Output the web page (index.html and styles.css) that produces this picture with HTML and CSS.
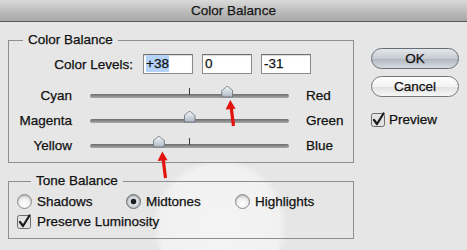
FILE: index.html
```html
<!DOCTYPE html>
<html lang="en">
<head>
    <title>Color Balance</title>
    <link rel="stylesheet" href="styles.css">
</head>
<body>
    <div class="titlebar">Color Balance</div>
    <div class="dialog">
        <div class="main">
            <fieldset class="group balance">
                <legend>Color Balance</legend>
                <div class="levels">
                    <span class="levels-label">Color Levels:</span>
                    <span class="field"><span class="selected">+38</span></span>
                    <span class="field">0</span>
                    <span class="field">-31</span>
                </div>
                <div class="sliders">
                    <div class="slider-row">
                        <span class="side left">Cyan</span>
                        <div class="track">
                            <span class="tick"></span>
                            <span class="thumb" style="left: 69%;"></span>
                        </div>
                        <span class="side">Red</span>
                    </div>
                    <div class="slider-row">
                        <span class="side left">Magenta</span>
                        <div class="track">
                            <span class="tick"></span>
                            <span class="thumb" style="left: 50%;"></span>
                        </div>
                        <span class="side">Green</span>
                    </div>
                    <div class="slider-row">
                        <span class="side left">Yellow</span>
                        <div class="track">
                            <span class="tick"></span>
                            <span class="thumb" style="left: 34.6%;"></span>
                        </div>
                        <span class="side">Blue</span>
                    </div>
                </div>
            </fieldset>

            <fieldset class="group tone">
                <legend>Tone Balance</legend>
                <div class="radios">
                    <label class="option"><span class="radio"></span>Shadows</label>
                    <label class="option"><span class="radio on"></span>Midtones</label>
                    <label class="option"><span class="radio"></span>Highlights</label>
                </div>
                <label class="option check-row">
                    <svg class="checkbox" width="15" height="15" viewBox="0 0 15 15">
                        <rect x="0.5" y="1.5" width="13" height="13" rx="2" class="box"/>
                        <path d="M3 8 L6 12 L12.5 1.5" class="tick-mark"/>
                    </svg>
                    Preserve Luminosity
                </label>
            </fieldset>
        </div>

        <div class="buttons">
            <button class="btn default">OK</button>
            <button class="btn">Cancel</button>
            <label class="option preview">
                <svg class="checkbox" width="15" height="15" viewBox="0 0 15 15">
                    <rect x="0.5" y="1.5" width="13" height="13" rx="2" class="box"/>
                    <path d="M3 8 L6 12 L12.5 1.5" class="tick-mark"/>
                </svg>
                Preview
            </label>
        </div>
    </div>

    <!-- red annotation arrows -->
    <svg class="arrows" width="467" height="250" viewBox="0 0 467 250">
        <line x1="233.5" y1="126" x2="231" y2="106"/>
        <polygon points="230.3,100 225.6,109.5 235.6,108.8"/>
        <line x1="165.5" y1="178" x2="163" y2="158"/>
        <polygon points="162.3,151.5 157.6,161 167.6,160.3"/>
    </svg>
</body>
</html>
```

FILE: styles.css
```css
html, body {
    margin: 0;
    height: 250px;
    overflow: hidden;
}

body {
    position: relative;
    font-family: "Liberation Sans", Arial, sans-serif;
    font-size: 13.5px;
    color: #111;
    -webkit-text-stroke: 0.25px #111;
    background:
        radial-gradient(circle 68px at 220px 226px, rgba(255, 255, 255, 0.55) 0%, rgba(255, 255, 255, 0.45) 88%, rgba(255, 255, 255, 0) 100%),
        #e6e6e6;
}

.titlebar {
    height: 21px;
    line-height: 21px;
    text-align: center;
    background: linear-gradient(#dadada, #b9b9b9 60%, #a9a9a9);
    border-bottom: 1px solid #595959;
    color: #1a1a1a;
}

.dialog {
    display: flex;
    gap: 17px;
    padding: 10px 8px 0 8px;
}

.main {
    width: 346px;
}

.group {
    margin: 0;
    padding: 0;
    border: 1px solid #8e8e8e;
    min-width: 0;
}

.group legend {
    margin-left: 14px;
    padding: 0 5px;
    line-height: 16px;
}

.balance {
    padding-bottom: 4px;
}

.levels {
    display: flex;
    align-items: center;
    gap: 9px;
    margin-top: 6px;
    height: 20px;
}

.levels-label {
    width: 124px;
    text-align: right;
    margin-right: 1px;
}

.field {
    box-sizing: border-box;
    width: 50px;
    height: 20px;
    line-height: 18px;
    padding-left: 2px;
    background: #fff;
    border: 1px solid #8a8a8a;
    border-top-color: #6f6f6f;
    box-shadow: inset 0 1px 1px rgba(0, 0, 0, 0.15);
}

.selected {
    background: #b5d3fb;
    padding: 1px 0;
}

.sliders {
    margin-top: 9px;
}

.slider-row {
    display: flex;
    align-items: center;
    height: 25px;
}

.side.left {
    width: 63px;
    text-align: right;
}

.track {
    position: relative;
    width: 199px;
    height: 4px;
    margin: 0 17px 0 18px;
    border-radius: 2px;
    background: linear-gradient(#6c6c6c, #8a8a8a 50%, #a8a8a8);
}

.tick {
    position: absolute;
    left: 99px;
    top: -6px;
    width: 1px;
    height: 7px;
    background: #3c3c3c;
}

.thumb {
    position: absolute;
    top: -8px;
    width: 12px;
    height: 12px;
    transform: translateX(-50%);
    background: linear-gradient(#8a929c, #6f7780);
    clip-path: polygon(50% 0, 100% 42%, 100% 100%, 0 100%, 0 42%);
}

.thumb::after {
    content: "";
    position: absolute;
    inset: 1px;
    background: linear-gradient(#f1f4f7, #c8d0d9 60%, #aeb7c2);
    clip-path: polygon(50% 0, 100% 42%, 100% 100%, 0 100%, 0 42%);
}

.tone {
    margin-top: 10px;
    padding: 0 0 8px 8px;
}

.radios {
    display: grid;
    grid-template-columns: 109px 109px 109px;
    margin-top: 4px;
    height: 17px;
}

.option {
    display: flex;
    align-items: center;
    gap: 5px;
}

.radio {
    box-sizing: border-box;
    width: 15px;
    height: 15px;
    border-radius: 50%;
    border: 1px solid #8c8c8c;
    background: radial-gradient(circle at 50% 70%, #ffffff, #f1f1f1 45%, #c9c9c9);
    box-shadow: inset 0 1px 1px rgba(0, 0, 0, 0.2);
}

.radio.on {
    border-color: #6b6b6b;
    background: radial-gradient(circle, #1e1e1e 0, #1e1e1e 2.5px, #e2e5e9 3.2px, #c4c9cf 6px, #9da3aa);
}

.check-row {
    margin-top: 3px;
    height: 17px;
}

.checkbox .box {
    fill: #e3e3e3;
    stroke: #6c6c6c;
    stroke-width: 1;
}

.checkbox .tick-mark {
    fill: none;
    stroke: #1c1c1c;
    stroke-width: 2.2;
    stroke-linecap: round;
    stroke-linejoin: round;
}

.buttons {
    display: flex;
    flex-direction: column;
    margin-top: 16px;
    width: 88px;
}

.btn {
    height: 21px;
    border-radius: 11px;
    border: 1px solid #777;
    font-family: inherit;
    font-size: 13.5px;
    color: #111;
    -webkit-text-stroke: 0.25px #111;
    padding: 0;
    background: linear-gradient(#ffffff, #f3f3f3 50%, #e2e2e2 55%, #f7f7f7);
}

.btn.default {
    border-color: #676d75;
    background: linear-gradient(#e4e8ec, #c7ccd2 50%, #b2b8c0 55%, #d8dde2);
}

.btn + .btn {
    margin-top: 7px;
}

.preview {
    margin-top: 14px;
    height: 17px;
    gap: 3px;
}

.arrows {
    position: absolute;
    left: 0;
    top: 0;
    pointer-events: none;
}

.arrows line {
    stroke: #e3140e;
    stroke-width: 3.2;
    -webkit-text-stroke: 0;
}

.arrows polygon {
    fill: #e3140e;
}
```
